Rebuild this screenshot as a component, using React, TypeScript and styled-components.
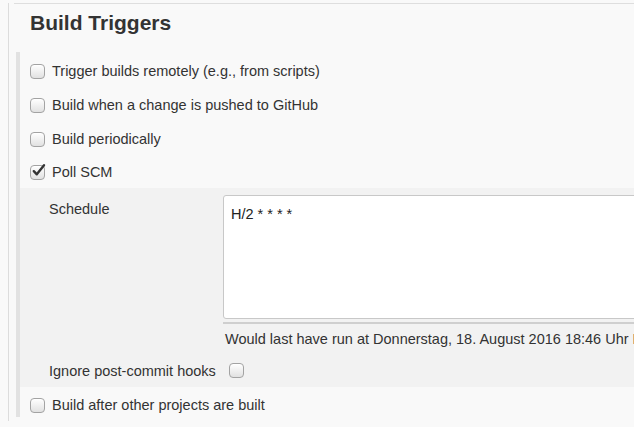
import React from "react";
import styled, { createGlobalStyle } from "styled-components";

const Global = createGlobalStyle`
  html, body { margin: 0; padding: 0; background: #f9f9f9; overflow: hidden; }
  body { font-family: "Liberation Sans", Arial, Helvetica, sans-serif; color: #333; font-size: 14.5px; }
`;

const Page = styled.div`
  width: 634px;
  height: 427px;
  padding-left: 8px;
  box-sizing: border-box;
  overflow: hidden;
`;

const Frame = styled.div`
  border-left: 1px solid #dcdcdc;
  height: 418px;
  padding-left: 5px;
  box-sizing: border-box;
  width: 900px;
`;

const Header = styled.div`
  margin-top: 3px;
  border-top: 1px solid #dedede;
  padding: 7px 0 17px 16px;
`;

const Title = styled.h2`
  margin: 0;
  font-size: 21px;
  line-height: 24px;
  font-weight: bold;
  color: #333;
`;

const Section = styled.div`
  margin-left: 2px;
  border-left: 4px solid #e2e2e2;
  height: 365px;
  padding-top: 2px;
  box-sizing: border-box;
`;

const Row = styled.label<{ $h?: number; $pt?: number }>`
  display: flex;
  align-items: center;
  gap: 7px;
  height: ${(p) => p.$h ?? 34}px;
  padding-top: ${(p) => p.$pt ?? 0}px;
  box-sizing: border-box;
  padding-left: 10px;
  font-size: 14.5px;
  color: #333;
  white-space: nowrap;
`;

const BoxWrap = styled.span`
  position: relative;
  display: inline-block;
  width: 15px;
  height: 15px;
  flex: none;
  border: 1px solid #a3a3a3;
  border-radius: 4px;
  box-sizing: border-box;
  background: linear-gradient(#ffffff, #e1e1e1);
  box-shadow: inset 0 1px 0 #fff;
`;

const Tick = styled.svg`
  position: absolute;
  left: 0px;
  top: -3px;
  width: 15px;
  height: 15px;
`;

const Nested = styled.div`
  background: #f2f2f2;
  height: 199px;
  display: grid;
  grid-template-columns: 29px 175px 1fr;
  grid-template-rows: 162px 37px;
  align-items: start;
`;

const Label = styled.div<{ $top?: number }>`
  grid-column: 2;
  padding-top: ${(p) => p.$top ?? 0}px;
  font-size: 14.5px;
  line-height: 16px;
  white-space: nowrap;
`;

const Main = styled.div`
  grid-column: 3;
  margin-left: -1px;
`;

const Area = styled.textarea`
  display: block;
  width: 460px;
  height: 124px;
  margin-top: 7px;
  box-sizing: border-box;
  border: 1px solid #c8c8c8;
  border-radius: 3px;
  background: #fff;
  padding: 10px 7px;
  font-family: "Liberation Sans", Arial, Helvetica, sans-serif;
  font-size: 14.5px;
  line-height: 16px;
  color: #222;
  resize: none;
  outline: none;
`;

const Handle = styled.div`
  height: 2px;
  margin-top: 3px;
  background: #cfcfcf;
  width: 460px;
`;

const Hint = styled.div`
  padding-top: 7px;
  padding-left: 2px;
  font-size: 14.5px;
  line-height: 16px;
  white-space: nowrap;
`;

const InlineCheck = styled.div`
  grid-column: 3;
  padding-left: 5px;
  padding-top: 13px;
`;

function Check({ checked = false }: { checked?: boolean }) {
  return (
    <BoxWrap>
      {checked && (
        <Tick viewBox="0 0 15 15">
          <path d="M2.8 8.2 L5.8 11.3 L13 2.2" fill="none" stroke="#333" strokeWidth="2.4" strokeLinecap="round" strokeLinejoin="round" />
        </Tick>
      )}
    </BoxWrap>
  );
}

export default function App() {
  return (
    <>
      <Global />
      <Page>
        <Frame>
          <Header>
            <Title>Build Triggers</Title>
          </Header>
          <Section>
            <Row>
              <Check />
              Trigger builds remotely (e.g., from scripts)
            </Row>
            <Row>
              <Check />
              Build when a change is pushed to GitHub
            </Row>
            <Row>
              <Check />
              Build periodically
            </Row>
            <Row $h={32}>
              <Check checked />
              Poll SCM
            </Row>
            <Nested>
              <Label $top={13}>Schedule</Label>
              <Main>
                <Area defaultValue="H/2 * * * *" />
                <Handle />
                <Hint>
                  Would last have run at Donnerstag, 18. August 2016 18:46 Uhr MESZ
                </Hint>
              </Main>
              <Label $top={13}>Ignore post-commit hooks</Label>
              <InlineCheck>
                <Check />
              </InlineCheck>
            </Nested>
            <Row $h={30} $pt={6}>
              <Check />
              Build after other projects are built
            </Row>
          </Section>
        </Frame>
      </Page>
    </>
  );
}
